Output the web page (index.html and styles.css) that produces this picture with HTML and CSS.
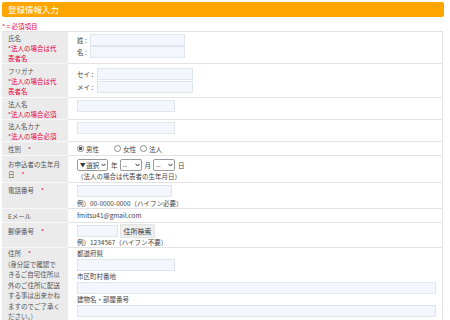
FILE: index.html
```html
<!DOCTYPE html>
<html lang="ja">
<head>
<meta charset="utf-8">
<title>登録情報入力</title>
<link rel="stylesheet" href="styles.css">
</head>
<body>
<div class="title">登録情報入力</div>
<div class="legend">* = 必須項目</div>
<table class="form">
  <colgroup><col class="c1"><col></colgroup>
  <tr>
    <th>氏名<br><span class="req">*法人の場合は代表者名</span></th>
    <td class="pad2">
      <div class="pair"><span class="pl w13">姓 :</span><input class="inp w95" type="text"></div>
      <div class="pair"><span class="pl w13">名 :</span><input class="inp w95" type="text"></div>
    </td>
  </tr>
  <tr>
    <th class="pt2">フリガナ<br><span class="req">*法人の場合は代表者名</span></th>
    <td class="pad4">
      <div class="pair"><span class="pl w20">セイ :</span><input class="inp w96" type="text"></div>
      <div class="pair gap1"><span class="pl w20">メイ :</span><input class="inp w96" type="text"></div>
    </td>
  </tr>
  <tr>
    <th>法人名<br><span class="req">*法人の場合必須</span></th>
    <td class="pad2"><input class="inp w98" type="text"></td>
  </tr>
  <tr>
    <th>法人名カナ<br><span class="req">*法人の場合必須</span></th>
    <td class="pad2"><input class="inp w98" type="text"></td>
  </tr>
  <tr>
    <th class="pt2">性別<span class="star">*</span></th>
    <td class="pad1b1">
      <div class="radios">
        <label class="rad r-wide"><input type="radio" name="sex" checked>男性</label><label class="rad r-narrow"><input type="radio" name="sex">女性</label><label class="rad"><input type="radio" name="sex">法人</label>
      </div>
    </td>
  </tr>
  <tr>
    <th class="pt3">お申込者の生年月日<span class="star">*</span></th>
    <td class="pad3">
      <div class="dates">
        <span class="sel w31"><span class="tri">▼</span>選択<svg width="5" height="4" viewBox="0 0 5 4"><polyline points="0.5,0.8 2.5,3 4.5,0.8" fill="none" stroke="#333" stroke-width="1"/></svg></span><span class="unit">年</span><span class="sel w22">--<svg width="5" height="4" viewBox="0 0 5 4"><polyline points="0.5,0.8 2.5,3 4.5,0.8" fill="none" stroke="#333" stroke-width="1"/></svg></span><span class="unit">月</span><span class="sel w22">--<svg width="5" height="4" viewBox="0 0 5 4"><polyline points="0.5,0.8 2.5,3 4.5,0.8" fill="none" stroke="#333" stroke-width="1"/></svg></span><span class="unit">日</span>
      </div>
      <div class="note">（法人の場合は代表者の生年月日）</div>
    </td>
  </tr>
  <tr>
    <th class="pt2">電話番号<span class="star">*</span></th>
    <td class="pad2b0">
      <input class="inp w95" type="text">
      <div class="note mt1">例）00-0000-0000（ハイフン必要）</div>
    </td>
  </tr>
  <tr>
    <th class="pt2">Eメール</th>
    <td class="pad1b1"><div class="oneline">fmitsu41@gmail.com</div></td>
  </tr>
  <tr>
    <th class="pt3">郵便番号<span class="star">*</span></th>
    <td class="pad1b0">
      <div class="zip"><input class="inp w41" type="text"><span class="btn">住所検索</span></div>
      <div class="note n9">例）1234567（ハイフン不要）</div>
    </td>
  </tr>
  <tr>
    <th class="addr">住所<span class="star">*</span><br>(身分証で確認できるご自宅住所以外のご住所に配送する事は出来かねますのでご了承ください。)</th>
    <td class="pad0">
      <div class="sub">都道府県</div>
      <input class="inp w98 mt1" type="text">
      <div class="sub">市区町村番地</div>
      <input class="inp full mt1" type="text">
      <div class="sub">建物名・部屋番号</div>
      <input class="inp full mt1" type="text">
    </td>
  </tr>
</table>
</body>
</html>
```

FILE: styles.css
```css
* { box-sizing: border-box; }
body {
  margin: 0;
  padding: 2px 6px 0 2px;
  background: #fff;
  font-family: "Noto Sans CJK JP", "Noto Sans", sans-serif;
  font-size: 6.5px;
  color: #555;
}
.title {
  height: 15px;
  background: #ffa500;
  border-radius: 2px;
  color: #fff;
  font-size: 8.5px;
  line-height: 15px;
  padding-left: 6px;
}
.legend {
  color: #e8003d;
  line-height: 10px;
  margin-top: 4px;
}
.form {
  width: 441px;
  border-collapse: separate;
  border-spacing: 0;
  table-layout: fixed;
  border-top: 1px solid #e3e3e3;
  border-right: 1px solid #e3e3e3;
}
.c1 { width: 66px; }
.form th {
  background: #ebebeb;
  font-weight: normal;
  text-align: left;
  vertical-align: top;
  padding: 1px 6px 0;
  line-height: 10px;
  border-bottom: 1px solid #f8f8f8;
  color: #555;
}
.form th.pt2 { padding-top: 2px; }
.form th.pt3 { padding-top: 3px; }
.form th.addr { padding-top: 0; line-height: 10.5px; }
.form td {
  vertical-align: top;
  padding: 2px 6px 1px 9px;
  border-bottom: 1px solid #e3e3e3;
  color: #444;
  line-height: 10px;
}
.form td.pad0 { padding-top: 0; padding-bottom: 2px; }
.form td.pad1b0 { padding-top: 1px; padding-bottom: 0; }
.form td.pad1b1 { padding-top: 1px; padding-bottom: 1px; }
.form td.pad2 { padding-top: 2px; padding-bottom: 1px; }
.form td.pad2b0 { padding-top: 2px; padding-bottom: 0; }
.form td.pad3 { padding-top: 3px; padding-bottom: 1px; }
.form td.pad4 { padding-top: 4px; padding-bottom: 4px; }
.req { color: #e8003d; }
.star { color: #e8003d; margin-left: 7px; }
.pair { display: flex; align-items: center; height: 12px; }
.gap1 { margin-top: 1px; }
.pl { display: inline-block; color: #444; }
.w13 { width: 13px; }
.w20 { width: 20px; }
.inp {
  display: block;
  height: 12px;
  margin: 0;
  padding: 0;
  border: 1px solid #dfe5ee;
  background: #f3f6fd;
  font-size: 6.5px;
}
.w95 { width: 95px; }
.w96 { width: 96px; }
.w98 { width: 98px; }
.w41 { width: 41px; }
.full { width: 100%; }
.mt1 { margin-top: 1px; }
.radios { display: flex; align-items: center; height: 11px; overflow: hidden; }
.oneline { height: 11px; line-height: 11px; overflow: hidden; }
.rad {
  display: flex;
  align-items: center;
  color: #444;
  line-height: 10px;
}
.rad input {
  appearance: none;
  -webkit-appearance: none;
  width: 7px;
  height: 7px;
  margin: 0 2px 0 0;
  border: 1px solid #8a8a8a;
  border-radius: 50%;
  background: #fff;
  flex: none;
}
.rad input:checked {
  background: radial-gradient(circle, #555 0, #555 1.4px, #fff 1.9px);
}
.r-wide { margin-right: 15px; }
.r-narrow { margin-right: 4px; }
.dates { display: flex; align-items: center; height: 12px; }
.sel {
  display: flex;
  align-items: center;
  justify-content: space-between;
  flex: none;
  white-space: nowrap;
  height: 12px;
  padding: 0 1px 0 2px;
  border: 1px solid #9a9a9a;
  border-radius: 2px;
  background: #fff;
  color: #333;
}
.sel svg { flex: none; margin-left: 1px; }
.tri { font-size: 5.5px; }
.w31 { width: 31px; }
.w22 { width: 22px; }
.unit { margin: 0 2px 0 3px; color: #444; }
.note { line-height: 10px; color: #444; }
.n9 { line-height: 9px; }
.zip { display: flex; align-items: center; height: 14px; }
.btn {
  display: inline-flex;
  align-items: center;
  justify-content: center;
  width: 35px;
  height: 14px;
  margin-left: 2px;
  background: #efefef;
  border: 1px solid #e4e4e4;
  border-radius: 1px;
  color: #333;
  font-size: 7px;
}
.sub { line-height: 10px; color: #444; }
```
